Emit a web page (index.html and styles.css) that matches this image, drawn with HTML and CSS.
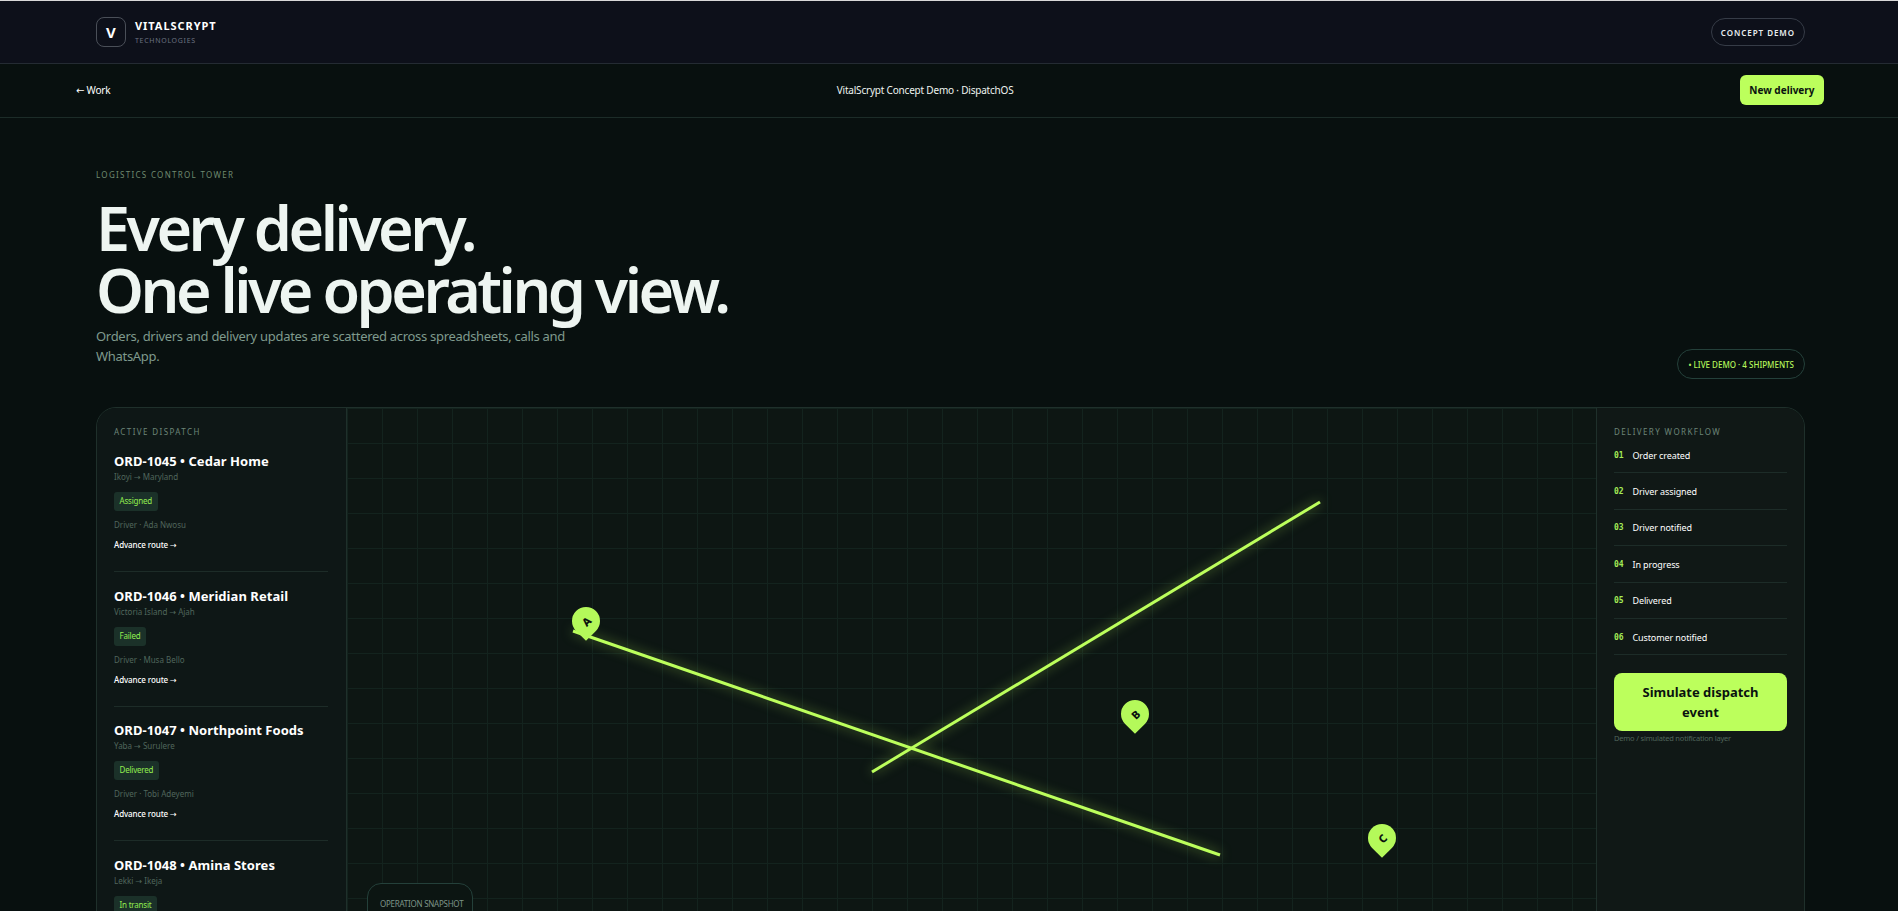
FILE: index.html
```html
<!DOCTYPE html>
<html lang="en">
<head>
    <meta charset="UTF-8">
    <meta name="viewport" content="width=device-width, initial-scale=1.0">
    <title>VitalScrypt Concept Demo - DispatchOS</title>
    <link rel="stylesheet" href="styles.css">
</head>
<body>
    <header class="site-header">
        <div class="brand">
            <span class="brand-mark">V</span>
            <span class="brand-text">
                <b>VITALSCRYPT</b>
                <small>TECHNOLOGIES</small>
            </span>
        </div>
        <span class="concept-pill">CONCEPT DEMO</span>
    </header>

    <nav class="demo-bar">
        <a class="back-link" href="#">← Work</a>
        <span class="demo-title">VitalScrypt Concept Demo · DispatchOS</span>
        <button class="new-delivery">New delivery</button>
    </nav>

    <main class="page">
        <section class="hero">
            <div class="hero-copy">
                <p class="eyebrow">LOGISTICS CONTROL TOWER</p>
                <h1>Every delivery.<br>One live operating view.</h1>
                <p class="lead">Orders, drivers and delivery updates are scattered across spreadsheets, calls and WhatsApp.</p>
            </div>
            <span class="live-pill">• LIVE DEMO · 4 SHIPMENTS</span>
        </section>

        <section class="console">
            <aside class="orders">
                <p class="panel-label">ACTIVE DISPATCH</p>
                <article class="order">
                    <h3>ORD-1045 • Cedar Home</h3>
                    <p class="route">Ikoyi → Maryland</p>
                    <span class="status">Assigned</span>
                    <p class="driver">Driver · Ada Nwosu</p>
                    <a class="advance" href="#">Advance route →</a>
                </article>
                <article class="order">
                    <h3>ORD-1046 • Meridian Retail</h3>
                    <p class="route">Victoria Island → Ajah</p>
                    <span class="status">Failed</span>
                    <p class="driver">Driver · Musa Bello</p>
                    <a class="advance" href="#">Advance route →</a>
                </article>
                <article class="order">
                    <h3>ORD-1047 • Northpoint Foods</h3>
                    <p class="route">Yaba → Surulere</p>
                    <span class="status">Delivered</span>
                    <p class="driver">Driver · Tobi Adeyemi</p>
                    <a class="advance" href="#">Advance route →</a>
                </article>
                <article class="order">
                    <h3>ORD-1048 • Amina Stores</h3>
                    <p class="route">Lekki → Ikeja</p>
                    <span class="status">In transit</span>
                </article>
            </aside>

            <div class="map">
                <svg class="routes" width="1250" height="640">
                    <line x1="226" y1="223" x2="873" y2="447"></line>
                    <line x1="525" y1="364" x2="973" y2="94"></line>
                </svg>
                <div class="pin pin-a"><span>A</span></div>
                <div class="pin pin-b"><span>B</span></div>
                <div class="pin pin-c"><span>C</span></div>
                <div class="snapshot">OPERATION SNAPSHOT</div>
            </div>

            <aside class="workflow">
                <p class="panel-label">DELIVERY WORKFLOW</p>
                <ol class="steps">
                    <li><code>01</code>Order created</li>
                    <li><code>02</code>Driver assigned</li>
                    <li><code>03</code>Driver notified</li>
                    <li><code>04</code>In progress</li>
                    <li><code>05</code>Delivered</li>
                    <li><code>06</code>Customer notified</li>
                </ol>
                <button class="simulate">Simulate dispatch event</button>
                <p class="note">Demo / simulated notification layer</p>
            </aside>
        </section>
    </main>
</body>
</html>
```

FILE: styles.css
```css
* {
    box-sizing: border-box;
}
body {
    font-family: "Noto Sans", "DejaVu Sans", sans-serif;
    background-color: #08100f;
    color: #fff;
    margin: 0;
    border-top: 1px solid #d8d8d8;
}
p, h1, h3, ol {
    margin: 0;
    padding: 0;
}
a {
    color: inherit;
    text-decoration: none;
}
.site-header {
    height: 63px;
    padding: 0 93px 0 96px;
    display: flex;
    justify-content: space-between;
    align-items: center;
    background-color: #0d101a;
    border-bottom: 1px solid #242b33;
}
.brand {
    display: flex;
    align-items: center;
    gap: 9px;
}
.brand-mark {
    width: 30px;
    height: 30px;
    display: flex;
    justify-content: center;
    align-items: center;
    border: 1px solid #4a4f58;
    border-radius: 8px;
    font-weight: 700;
    font-size: 15px;
}
.brand-text {
    display: flex;
    flex-direction: column;
    gap: 3px;
    padding-top: 1px;
}
.brand-text b {
    font-size: 11px;
    letter-spacing: 0.95px;
    line-height: 14px;
}
.brand-text small {
    font-size: 7px;
    letter-spacing: 0.7px;
    line-height: 10px;
    color: #6b7280;
}
.concept-pill {
    height: 28px;
    padding: 0 9px;
    display: flex;
    align-items: center;
    border: 1px solid #363c47;
    border-radius: 14px;
    font-size: 8px;
    font-weight: 600;
    letter-spacing: 0.95px;
    color: #e8edf0;
}
.demo-bar {
    height: 54px;
    padding: 0 74px 2px 76px;
    display: flex;
    justify-content: space-between;
    align-items: center;
    background-color: #08100f;
    border-bottom: 1px solid #1c2c28;
    font-size: 10px;
    letter-spacing: -0.2px;
}
.demo-title {
    color: #eef4f0;
}
.new-delivery {
    height: 30px;
    padding: 0 9.5px;
    border: none;
    border-radius: 6px;
    background-color: #bcff5c;
    color: #0a120f;
    font-family: inherit;
    font-size: 10px;
    font-weight: 700;
}
.page {
    padding: 0 93px 40px 96px;
}
.hero {
    height: 289px;
    display: flex;
    justify-content: space-between;
    align-items: flex-end;
    padding-bottom: 28px;
}
.hero-copy {
    margin-bottom: 13px;
}
.eyebrow {
    font-size: 8px;
    letter-spacing: 1.3px;
    color: #6f8a70;
    line-height: 12px;
}
h1 {
    margin-top: 16px;
    font-size: 61px;
    line-height: 62px;
    font-weight: 600;
    letter-spacing: -3.5px;
    color: #eef5f1;
}
.lead {
    max-width: 500px;
    margin-top: 5px;
    font-size: 13px;
    line-height: 20px;
    letter-spacing: -0.3px;
    color: #7f9a8d;
}
.live-pill {
    height: 30px;
    padding: 0 10px;
    display: flex;
    align-items: center;
    border: 1px solid #24403a;
    border-radius: 15px;
    font-size: 8px;
    font-weight: 500;
    color: #b4f55a;
}
.console {
    display: grid;
    grid-template-columns: 250px 1fr 208px;
    background-color: #0e1714;
    border: 1px solid #1f302b;
    border-radius: 20px;
    overflow: hidden;
}
.orders {
    padding: 19px 18px 20px 17px;
    border-right: 1px solid #1f302b;
    background-color: #0e1716;
}
.panel-label {
    font-size: 8px;
    letter-spacing: 1.4px;
    line-height: 9px;
    color: #6c8578;
}
.order {
    padding-top: 14.5px;
    border-bottom: 1px solid #1d2c28;
    height: 134.5px;
}
.order:first-of-type {
    padding-top: 16px;
    height: 136px;
}
.order h3 {
    font-size: 13px;
    line-height: 18px;
    letter-spacing: 0.05px;
    white-space: nowrap;
}
.route, .driver {
    font-size: 8px;
    line-height: 12px;
    color: #50665c;
}
.route {
    margin-top: 1px;
}
.status {
    display: inline-block;
    margin-top: 9px;
    padding: 0 5.5px;
    height: 19px;
    line-height: 18px;
    border-radius: 3px;
    background-color: #1b3129;
    color: #93ee50;
    font-size: 8px;
    letter-spacing: -0.2px;
}
.driver {
    margin-top: 8px;
}
.advance {
    display: block;
    margin-top: 8px;
    font-size: 8px;
    line-height: 12px;
    font-weight: 500;
    letter-spacing: -0.1px;
}
.map {
    position: relative;
    height: 640px;
    background-color: #0d1613;
    background-image:
        linear-gradient(#13231e 1px, transparent 1px),
        linear-gradient(90deg, #13231e 1px, transparent 1px);
    background-size: 35px 35px;
}
.routes {
    position: absolute;
    top: 0;
    left: 0;
}
.routes line {
    stroke: #bcff5c;
    stroke-width: 3;
    filter: drop-shadow(0 0 6px rgba(188, 255, 92, 0.5));
}
.pin {
    position: absolute;
    width: 28px;
    height: 28px;
    display: flex;
    justify-content: center;
    align-items: center;
    background-color: #b4f95a;
    border-radius: 50% 50% 50% 0;
    transform: rotate(-45deg);
    color: #0a120f;
    font-size: 11px;
    font-weight: 800;
}
.pin-a {
    left: 225px;
    top: 199px;
}
.pin-b {
    left: 774px;
    top: 292px;
}
.pin-c {
    left: 1021px;
    top: 416px;
}
.snapshot {
    position: absolute;
    left: 20px;
    top: 475px;
    width: 106px;
    height: 120px;
    padding: 14px 12px;
    border: 1px solid #24403a;
    border-radius: 14px;
    background-color: #0c1512;
    font-size: 8px;
    letter-spacing: -0.25px;
    white-space: nowrap;
    color: #7d9488;
}
.workflow {
    padding: 19px 17px;
    border-left: 1px solid #1f302b;
    background-color: #101816;
}
.steps {
    list-style: none;
    margin-top: 1px;
}
.steps li {
    height: 36.4px;
    padding-top: 1px;
    display: flex;
    align-items: center;
    gap: 9px;
    border-bottom: 1px solid #1d2c28;
    font-size: 9px;
    letter-spacing: -0.1px;
}
.steps code {
    font-family: "DejaVu Sans Mono", monospace;
    font-size: 8px;
    font-weight: 700;
    color: #a5ec56;
}
.simulate {
    display: block;
    width: 100%;
    height: 58px;
    margin-top: 18px;
    padding: 0 20px;
    border: none;
    border-radius: 8px;
    background-color: #bcff5c;
    color: #0a120f;
    font-family: inherit;
    font-size: 13px;
    line-height: 20px;
    font-weight: 700;
}
.note {
    margin-top: 1px;
    font-size: 7.5px;
    letter-spacing: -0.2px;
    line-height: 12px;
    color: #50665c;
}
```
